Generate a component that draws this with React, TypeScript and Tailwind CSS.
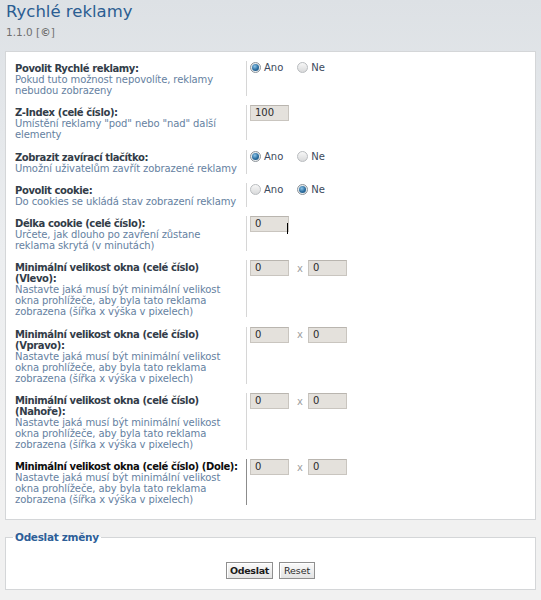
import React from "react";

type Control =
  | { kind: "radio"; yes: boolean }
  | { kind: "text"; value: string; cursor?: boolean }
  | { kind: "size" };

type Row = {
  title: string[];
  desc: string[];
  control: Control;
  active?: boolean;
};

const sizeDesc = [
  "Nastavte jaká musí být minimální velikost",
  "okna prohlížeče, aby byla tato reklama",
  "zobrazena (šířka x výška v pixelech)",
];

const rows: Row[] = [
  {
    title: ["Povolit Rychlé reklamy:"],
    desc: ["Pokud tuto možnost nepovolíte, reklamy", "nebudou zobrazeny"],
    control: { kind: "radio", yes: true },
  },
  {
    title: ["Z-Index (celé číslo):"],
    desc: ['Umístění reklamy "pod" nebo "nad" další', "elementy"],
    control: { kind: "text", value: "100" },
  },
  {
    title: ["Zobrazit zavírací tlačítko:"],
    desc: ["Umožní uživatelům zavřít zobrazené reklamy"],
    control: { kind: "radio", yes: true },
  },
  {
    title: ["Povolit cookie:"],
    desc: ["Do cookies se ukládá stav zobrazení reklamy"],
    control: { kind: "radio", yes: false },
  },
  {
    title: ["Délka cookie (celé číslo):"],
    desc: ["Určete, jak dlouho po zavření zůstane", "reklama skrytá (v minutách)"],
    control: { kind: "text", value: "0", cursor: true },
  },
  {
    title: ["Minimální velikost okna (celé číslo)", "(Vlevo):"],
    desc: sizeDesc,
    control: { kind: "size" },
  },
  {
    title: ["Minimální velikost okna (celé číslo)", "(Vpravo):"],
    desc: sizeDesc,
    control: { kind: "size" },
  },
  {
    title: ["Minimální velikost okna (celé číslo)", "(Nahoře):"],
    desc: sizeDesc,
    control: { kind: "size" },
  },
  {
    title: ["Minimální velikost okna (celé číslo) (Dole):"],
    desc: sizeDesc,
    control: { kind: "size" },
    active: true,
  },
];

const Radio = ({ checked, label }: { checked: boolean; label: string }) => (
  <span className="flex items-center gap-[3px]">
    <span
      className={
        checked
          ? "flex h-[11px] w-[11px] items-center justify-center rounded-full border border-[#8e959b] bg-[#e9ecee]"
          : "h-[11px] w-[11px] rounded-full border border-[#b9bcbf] bg-[linear-gradient(#f7f7f7,#d9dadb)]"
      }
    >
      {checked && (
        <span className="h-[7px] w-[7px] rounded-full bg-[radial-gradient(circle_at_40%_35%,#8cc4e8,#2a6c9e_55%,#1b4f78)]" />
      )}
    </span>
    <span className="text-[#3b4a5c]">{label}</span>
  </span>
);

const Field = ({ value, cursor }: { value: string; cursor?: boolean }) => (
  <span className="relative block h-[16px] w-[39px] border border-[#c9c5bf] border-t-[#b9b5af] bg-[#e4e1dc] pl-[4px] leading-[14px] text-[#2b2b2b]">
    {value}
    {cursor && <span className="absolute left-[36px] top-[6px] h-[11px] w-px bg-black" />}
  </span>
);

const ControlCell = ({ control }: { control: Control }) => {
  if (control.kind === "radio") {
    return (
      <div className="flex gap-[14px] pt-px">
        <Radio checked={control.yes} label="Ano" />
        <Radio checked={!control.yes} label="Ne" />
      </div>
    );
  }
  if (control.kind === "text") {
    return <Field value={control.value} cursor={control.cursor} />;
  }
  return (
    <div className="flex items-center">
      <Field value="0" />
      <span className="ml-[8px] mr-[5px] text-[#a0a0a0]">x</span>
      <Field value="0" />
    </div>
  );
};

export default function App() {
  return (
    <div
      className="min-h-[600px] bg-[linear-gradient(#dde1e5,#eceef0_250px,#f1f1f1_500px)] px-[5px] pt-[2px] text-[10px] font-['DejaVu_Sans',sans-serif]"
    >
      <h1 className="pl-px text-[16.5px] leading-[20px] text-[#2b5d92]">Rychlé reklamy</h1>
      <div className="mt-[4px] pl-px text-[10.5px] leading-[12px] text-[#707070]">
        1.1.0 [<b>©</b>]
      </div>

      <div className="mt-[13px] border border-[#d4d6d8] bg-white pb-[14px] pl-[9px] pr-[9px] pt-[11px]">
        <div className="flex flex-col gap-[11.3px]">
          {rows.map((row, i) => (
            <div key={i} className="flex leading-[11px]">
              <div className="w-[231px] shrink-0 whitespace-nowrap">
                {row.title.map((t, j) => (
                  <div
                    key={j}
                    className={
                      row.active
                        ? "font-bold tracking-[-0.4px] text-[#0d0d0d]"
                        : "font-bold tracking-[-0.4px] text-[#323c48]"
                    }
                  >
                    {t}
                  </div>
                ))}
                {row.desc.map((d, j) => (
                  <div key={j} className="tracking-[-0.1px] text-[#6581a1]">
                    {d}
                  </div>
                ))}
              </div>
              <div
                className={
                  row.active
                    ? "-mt-[2px] border-l border-[#8c8c8c] pl-[3px]"
                    : "-mt-[2px] border-l border-[#d6d6d6] pl-[3px]"
                }
              >
                <ControlCell control={row.control} />
              </div>
            </div>
          ))}
        </div>
      </div>

      <fieldset className="mt-[11px] border border-[#d4d6d8] bg-white pb-[10px] pt-[19px]">
        <legend className="ml-[7px] px-[2px] text-[10.5px] font-bold leading-[12px] tracking-[-0.3px] text-[#2d5e98]">
          Odeslat změny
        </legend>
        <div className="flex justify-center gap-[6px]">
          <button className="h-[17px] border border-[#8f8f8f] bg-[linear-gradient(#fafafa,#e3e3e3)] px-[3px] text-[9.5px] font-bold leading-[15px] tracking-[-0.3px] text-[#1a1a1a] shadow-[inset_1px_1px_0_#ffffff]">
            Odeslat
          </button>
          <button className="h-[17px] border border-[#8f8f8f] bg-[linear-gradient(#fafafa,#e3e3e3)] px-[4px] text-[9.5px] leading-[15px] tracking-[-0.1px] text-[#2a2a2a] shadow-[inset_1px_1px_0_#ffffff]">
            Reset
          </button>
        </div>
      </fieldset>
    </div>
  );
}
